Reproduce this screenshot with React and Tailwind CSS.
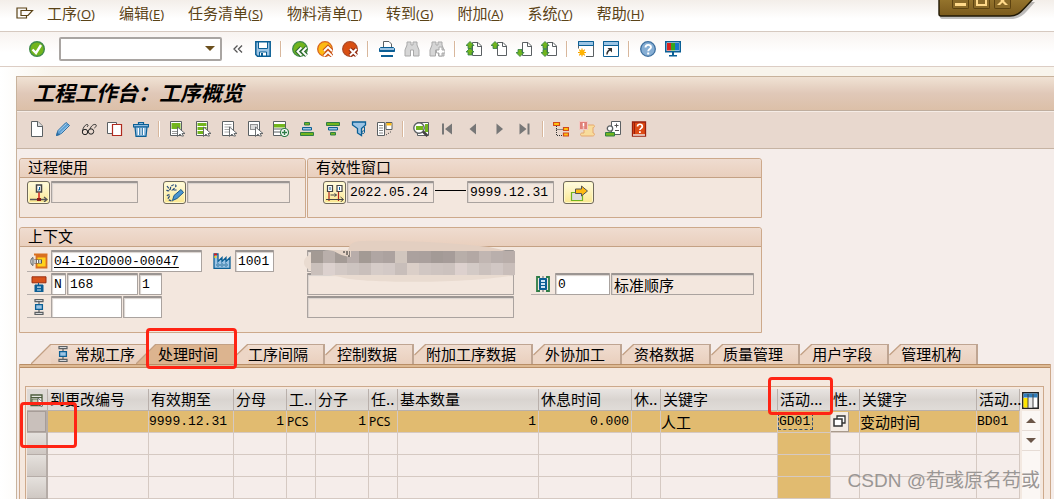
import React from 'react';

const G = '#5b6063';
const BLUE = '#0b5f95';
const SKY = '#9cc4e4';
const GREEN = '#72b51d';
const DKGREEN = '#2f7d46';

function Icon({ w = 16, h = 16, children }) {
  return (
    <svg width={w} height={h} viewBox={`0 0 ${w} ${h}`} fill="none" aria-hidden="true" className="shrink-0">
      {children}
    </svg>
  );
}

const page = <path d="M6.500 1.500H12L15.500 5v9.500H6.500z" fill="#fff" stroke={G} />;
const fold = <path d="M11.500 1.500v4h4" stroke={G} />;
const arrowUp = (x, y) => <path d={`M${x} ${y}l4 4h-2v3h-4v-3h-2z`} fill={GREEN} stroke={DKGREEN} strokeWidth="0.8" />;
const arrowDown = (x, y) => <path d={`M${x} ${y}l4-4h-2v-3h-4v3h-2z`} fill={GREEN} stroke={DKGREEN} strokeWidth="0.8" />;
const cursor = <path d="M8.500 6v9.500l2.500-2.500 1.500 2h2l-1.500-2.500h3z" fill="#fff" stroke={G} strokeWidth="0.9" />;
const binocular = (
  <path d="M2 1h4v3h2V1h4v3l2 5v6H8.500V9h-3v6H0V9l2-5z" transform="translate(1 0)" fill="#d6d6d6" stroke="#a9a9a9" />
);

const icons = {
  ok: (
    <Icon>
      <circle cx="8" cy="8" r="7.300" fill={GREEN} stroke="#3f8a4b" strokeWidth="1.400" />
      <path d="M3.500 8.500l3.500 3.500 5-8" stroke="#fff" strokeWidth="2.400" />
    </Icon>
  ),
  collapse: (
    <Icon w={10} h={8}>
      <path d="M4.500 0.500L1 4l3.500 3.500M9 0.500L5.500 4 9 7.500" stroke="#555" strokeWidth="1.300" />
    </Icon>
  ),
  save: (
    <Icon>
      <path d="M0.800 0.800h14.400v14.400H2.500l-1.700-1.700z" fill={SKY} stroke={BLUE} strokeWidth="1.500" />
      <path d="M3.500 1h9v6.500h-9z" fill="#fff" stroke={BLUE} />
      <path d="M4.500 11h7v4h-7z" fill="#fff" stroke={BLUE} />
      <path d="M6 12h2v3H6z" fill={BLUE} />
    </Icon>
  ),
  back: (
    <Icon>
      <circle cx="8" cy="8" r="7.300" fill={GREEN} stroke="#3f8a4b" strokeWidth="1.300" />
      <path d="M9.500 6.500L5.500 10.500l4 4M14.500 6.500l-4 4 4 4" stroke="#2f6b33" strokeWidth="4" />
      <path d="M9.500 6.500L5.500 10.500l4 4M14.500 6.500l-4 4 4 4" stroke="#fff" strokeWidth="1.800" />
    </Icon>
  ),
  exit: (
    <Icon>
      <circle cx="8" cy="8" r="7.300" fill="#fdb913" stroke="#d9661f" strokeWidth="1.300" />
      <path d="M7 10l4-4 4 4M7 15l4-4 4 4" stroke="#c95318" strokeWidth="4" />
      <path d="M7 10l4-4 4 4M7 15l4-4 4 4" stroke="#fff" strokeWidth="1.800" />
    </Icon>
  ),
  cancel: (
    <Icon>
      <circle cx="8" cy="8" r="7.300" fill="#d94f12" stroke="#ad4a26" strokeWidth="1.300" />
      <path d="M8 8l6.500 6.500M14.500 8L8 14.500" stroke="#8f2a10" strokeWidth="4.200" />
      <path d="M8 8l6.500 6.500M14.500 8L8 14.500" stroke="#fff" strokeWidth="2" />
    </Icon>
  ),
  print: (
    <Icon>
      <path d="M4.500 6V0.500H10L12.500 3v3" fill="#fff" stroke={G} />
      <path d="M1.500 6.500h13l1 1v3h-15v-3z" fill={SKY} stroke={BLUE} />
      <path d="M0.500 9h15v1.500h-15z" fill={BLUE} />
      <path d="M2 14h12v2H2z" fill={BLUE} />
    </Icon>
  ),
  find: <Icon>{binocular}</Icon>,
  findNext: (
    <Icon>
      {binocular}
      <path d="M10 6h3v3h3v3h-3v3h-3v-3H7.500V9H10z" fill="#fff" stroke="#aaa" />
    </Icon>
  ),
  first: <Icon>{page}{fold}{arrowUp(4, 0.5)}{arrowUp(4, 7)}</Icon>,
  prev: <Icon>{page}{fold}{arrowUp(4, 0.5)}</Icon>,
  next: <Icon>{page}{fold}{arrowDown(4, 15.5)}</Icon>,
  last: <Icon>{page}{fold}{arrowUp(4, 0.5)}{arrowDown(4, 15.5)}</Icon>,
  session: (
    <Icon>
      <path d="M0.500 0.500h15v15h-15z" fill="#fff" stroke={G} />
      <path d="M0.500 0.500h15v4h-15z" fill={SKY} stroke={BLUE} />
      <path d="M0 7.500h8v8.500H0z" fill="#fff" />
      <path d="M4 7.500v8M0 11.500h8M1.200 8.700l5.600 5.600M6.800 8.700l-5.600 5.600" stroke="#f5a000" strokeWidth="1.200" />
      <circle cx="4" cy="11.500" r="2.500" fill="#ffb400" />
    </Icon>
  ),
  shortcut: (
    <Icon>
      <path d="M0.500 0.500h15v15h-15z" fill="#fff" stroke={BLUE} />
      <path d="M0.500 0.500h15v4h-15z" fill={SKY} stroke={BLUE} />
      <path d="M4 13.500c0-3 1-4 3.500-5" stroke="#333" strokeWidth="1.500" />
      <path d="M4.500 7H9v4.500z" fill="#333" />
    </Icon>
  ),
  help: (
    <Icon>
      <circle cx="8" cy="8" r="7.300" fill="#86aed4" stroke="#3d6f9f" strokeWidth="1.300" />
      <path d="M5.500 6.500C5.500 3 11 3 11 6.200 11 8 8.200 8 8.200 10.300" stroke="#fff" strokeWidth="1.900" />
      <path d="M7.200 11.500h2v2h-2z" fill="#fff" />
    </Icon>
  ),
  monitor: (
    <Icon>
      <path d="M0.800 0.800h14.400v9.900H0.800z" fill="#fff" stroke={BLUE} strokeWidth="1.600" />
      <path d="M2 2h4v7.500H2z" fill="#d8201c" />
      <path d="M6 2h4v7.500H6z" fill="#36a51c" />
      <path d="M10 2h4v7.500h-4z" fill="#1677c8" />
      <path d="M7 11h2v3H7zM4 14h8v1.500H4z" fill={BLUE} />
    </Icon>
  ),
  create: (
    <Icon>
      <path d="M2.500 0.500H9L13.500 5v10.500h-11z" fill="#fff" stroke={G} />
      <path d="M8.500 0.500v5h5" fill="#ddd" stroke={G} />
    </Icon>
  ),
  edit: (
    <Icon>
      <path d="M1.500 14.500l1.500-5L11 1.500l3.500 3L6.500 12.500z" fill="#5ea0d4" stroke="#2c6ea3" />
      <path d="M3.500 10L11.500 2.500M5.500 12L13.500 4.500" stroke="#b9dcf4" strokeWidth="0.800" />
      <path d="M1 15l1-4 3 3z" fill="#2c6ea3" />
    </Icon>
  ),
  glasses: (
    <Icon>
      <circle cx="4" cy="11" r="2.700" stroke="#222" />
      <circle cx="10" cy="10.500" r="2.700" stroke="#222" />
      <path d="M1.500 10C2 6 5 3 6.500 3.500S6 6 6 6M6.700 10.500h.8M9 8c1-3 3.500-5 5.500-4.500S14 7 13.500 7" stroke="#222" strokeWidth="0.900" />
    </Icon>
  ),
  copy: (
    <Icon>
      <path d="M0.500 1.500h9v11h-9z" fill="#fff" stroke={G} />
      <path d="M5.500 3.500h9v11h-9z" fill="#fff" stroke="#b02a1e" strokeWidth="1.200" />
    </Icon>
  ),
  trash: (
    <Icon>
      <path d="M5.500 3V1.500h5V3M0.500 6V3.500h15V6z" fill="#8fbce0" stroke={BLUE} strokeWidth="1.200" />
      <path d="M2 6h12l-1 9.300H3z" fill="#8fbce0" stroke={BLUE} strokeWidth="1.200" />
      <path d="M5.500 7v7M8 7v7M10.500 7v7" stroke="#fff" strokeWidth="1.200" />
      <path d="M6.800 7v7M9.300 7v7" stroke={BLUE} strokeWidth="0.800" />
    </Icon>
  ),
  pickOne: (
    <Icon>
      <path d="M1.500 0.500h11v14h-11z" fill="#fff" stroke={G} />
      <path d="M2.500 2h9v6h-9z" fill={GREEN} />
      <path d="M3 10.500h5M3 12.500h5" stroke="#999" />
      {cursor}
    </Icon>
  ),
  pickAll: (
    <Icon>
      <path d="M1.500 0.500h11v14h-11z" fill="#fff" stroke={G} />
      <path d="M2.500 2h9v3h-9zM2.500 6h9v3h-9zM2.500 10h6v3h-6z" fill={GREEN} />
      {cursor}
    </Icon>
  ),
  pickNone: (
    <Icon>
      <path d="M1.500 0.500h11v14h-11z" fill="#fff" stroke={G} />
      <path d="M3.500 3.500h7M3.500 6h7M3.500 8.500h5M3.500 11h5" stroke="#aaa" />
      {cursor}
    </Icon>
  ),
  pickBlock: (
    <Icon>
      <path d="M1.500 0.500h11v14h-11z" fill="#fff" stroke={G} />
      <path d="M3.500 3.500h7v5h-7z" fill="#ddd" stroke="#333" strokeDasharray="1 1" />
      {cursor}
    </Icon>
  ),
  insert: (
    <Icon>
      <path d="M0.500 0.500h12v14h-12z" fill="#fff" stroke={G} />
      <path d="M1 3h11v3.500H1z" fill={GREEN} />
      <path d="M1 8h11M1 11h8" stroke={G} />
      <circle cx="11.500" cy="11.500" r="4" fill="#fff" stroke={DKGREEN} strokeWidth="1.200" />
      <path d="M11.500 9v5M9 11.500h5" stroke={DKGREEN} strokeWidth="1.400" />
    </Icon>
  ),
  asc: (
    <Icon>
      <path d="M5.500 1.500h5v2.500h-5zM1.500 11.500h13v3h-13z" fill={GREEN} stroke={DKGREEN} />
      <path d="M3.500 6.500h9v2.500h-9z" fill={SKY} stroke={BLUE} />
    </Icon>
  ),
  desc: (
    <Icon>
      <path d="M1.500 1.500h13v3h-13zM5.500 11.500h5v2.500h-5z" fill={GREEN} stroke={DKGREEN} />
      <path d="M3.500 6.500h9v2.500h-9z" fill={SKY} stroke={BLUE} />
    </Icon>
  ),
  filter: (
    <Icon>
      <path d="M1.500 1h13v3l-4 3.500v7L6.500 12V7.500l-5-3.500z" fill={SKY} stroke={BLUE} strokeWidth="1.300" />
      <path d="M13.500 6v5.500c-1 2-3 1-2.500-.5s2-1.500 2.500-.5" stroke={BLUE} />
    </Icon>
  ),
  layout: (
    <Icon>
      <path d="M0.500 1.500h7v13h-7z" fill="#fff" stroke={G} />
      <path d="M2 4.500h4M2 7h4M2 9.500h4M2 12h4" stroke="#888" />
      <path d="M9 1.500h6v7H9z" fill="#fff" stroke={G} />
      <path d="M9.500 2h5v2.500h-5z" fill="#fdb913" />
      <path d="M9 14l6-4" stroke="#333" strokeDasharray="1 1.500" />
    </Icon>
  ),
  search: (
    <Icon>
      <path d="M4.500 1.500h11v13h-11z" fill="#fff" stroke={G} />
      <path d="M12 3h3v8h-3z" fill={GREEN} />
      <circle cx="6" cy="7" r="5.200" fill="#fff" stroke={G} strokeWidth="1.400" />
      <path d="M3 5h7v4H3z" fill={GREEN} />
      <path d="M10 10.500l4.500 4.500" stroke="#444" strokeWidth="2.600" />
    </Icon>
  ),
  toFirst: <Icon><path d="M3 2.500h2v11H3zM13 2.500v11L6 8z" fill="#777" /></Icon>,
  toPrev: <Icon><path d="M11 2.500v11L4.500 8z" fill="#777" /></Icon>,
  toNext: <Icon><path d="M5.500 2.500v11L12 8z" fill="#777" /></Icon>,
  toLast: <Icon><path d="M2.500 2.500v11L9.500 8zM10.500 2.500h2v11h-2z" fill="#777" /></Icon>,
  tree: (
    <Icon>
      <path d="M3.500 5v9.500h7M3.500 8.500h7" stroke="#333" strokeDasharray="1 1" />
      <path d="M0.500 1.500h6v3h-6zM10.500 6.500h5v3h-5zM10.500 12h5v3h-5z" fill="#ffc20e" stroke="#d2491a" strokeWidth="1.200" />
    </Icon>
  ),
  alertLog: (
    <Icon>
      <path d="M5 4h9c2 0 2 2.500 0 2.500V12c2 0 2 3-.5 3H3c-2 0-2-3 0-3h2z" fill="#f8dc9c" stroke="#e6a76c" />
      <path d="M0.500 0.500h8v8h-8z" fill="#e08078" stroke="#f3c9c4" />
      <path d="M4.500 2v3.500M4.500 6.500v1" stroke="#fff" strokeWidth="1.500" />
    </Icon>
  ),
  assign: (
    <Icon>
      <path d="M6.500 0.500h9v13h-9z" fill="#fff" stroke={G} />
      <path d="M11.500 2.500v4M9.500 4.500h4M10 9.500h4" stroke="#555" />
      <circle cx="5" cy="7.500" r="2.700" fill="#fff" stroke={G} strokeWidth="1.300" />
      <path d="M0.500 11.500h9v3.500h-9z" fill={GREEN} stroke={DKGREEN} />
    </Icon>
  ),
  manual: (
    <Icon>
      <path d="M1.500 1h13v14h-13z" fill="#dd4a14" stroke="#99200e" strokeWidth="1.300" />
      <path d="M3.500 1v12" stroke="#99200e" />
      <path d="M2 14h12" stroke="#eee" strokeWidth="1.400" />
      <path d="M6.500 5.500c0-3 4.800-3 4.800 0 0 2-2.400 1.800-2.400 3.600" stroke="#fff" strokeWidth="1.700" />
      <path d="M8 10.200h1.800V12H8z" fill="#fff" />
    </Icon>
  ),
  process: (
    <Icon w={18} h={18}>
      <path d="M6.500 1h5v7h-5z" fill="#fff" stroke="#444" strokeWidth="1.500" />
      <path d="M9.500 3v3h-1.500" stroke={BLUE} />
      <path d="M9 8.500v6" stroke="#d8201c" strokeWidth="1.500" />
      <path d="M0 15.500h17M14 13l3 2.500-3 2.500" stroke="#555" strokeWidth="1.300" />
      <path d="M7 14h4v3H7z" fill="#8a1d17" />
    </Icon>
  ),
  sketch: (
    <Icon w={18} h={18}>
      <path d="M1 2l3 4M0.500 6c2 2 4 0 4-2s3-4 5-3-2 4-3 5h5M1 12c1-2 4-1 2 1s0 4 4 4" stroke="#24497c" strokeWidth="1.200" strokeDasharray="3 1" />
      <path d="M6.500 16.500l1.500-5 7-6 2.500 3-6.500 6z" fill="#4b95cf" stroke="#1e5b88" />
    </Icon>
  ),
  range: (
    <Icon w={18} h={18}>
      <path d="M1.500 1.500h5v6h-5zM11 1.500h5v6h-5z" fill="#fff" stroke="#444" strokeWidth="1.200" />
      <path d="M4 3v3M13.500 3v3" stroke={BLUE} />
      <path d="M3 8v9M12.500 8v9" stroke="#b2251c" strokeWidth="1.200" />
      <path d="M4.500 11h6M8.500 9.500l2 1.500-2 1.500M0 15.500h17M14.500 13l3 2.500-3 2.500" stroke="#444" />
    </Icon>
  ),
  goto: (
    <Icon w={18}>
      <path d="M1.500 7.500h11v8h-11z" fill="#ddd" stroke={GREEN} strokeWidth="1.200" />
      <path d="M5.500 8.500V4h6V1l6 5-6 5V8.500z" fill="#fdb913" stroke="#555" />
    </Icon>
  ),
  material: (
    <Icon w={18}>
      <path d="M4 1.500h13.500M6.500 3.500h10v11h-10z" fill="#ffd21c" stroke="#d9701f" strokeWidth="1.800" />
      <path d="M3 4.500c-3 1-3 7 0 8z" fill="#ddd" stroke={G} />
      <path d="M4 8.500h8" stroke="#555" strokeWidth="4" />
      <path d="M5 7v3M7.500 7v3M10 7v3" stroke="#fff" strokeWidth="1.300" />
    </Icon>
  ),
  factory: (
    <Icon w={18}>
      <path d="M1 1v14.500h16V4.500l-4 4v-4l-4 4v-4l-4 4V1z" fill={SKY} stroke={BLUE} strokeWidth="1.300" />
      <path d="M1 0.500h3v2H1z" fill="#d8201c" />
      <path d="M1.500 3h2v2h-2z" fill="#ffd21c" />
      <path d="M4 11h2v2H4zM8 11h2v2H8zM12 11h2v2h-2z" fill="#fff" stroke={BLUE} strokeWidth="0.800" />
    </Icon>
  ),
  network: (
    <Icon>
      <path d="M1 0.800h14v6H1z" fill="#d9531b" stroke="#9b2f12" />
      <path d="M7.500 7v2M4 9h8v7H4z" fill={BLUE} stroke={BLUE} />
      <path d="M6 10.500h4v1.200H6zM6 13.500h4v1H6z" fill="#cfe4f4" />
    </Icon>
  ),
  operation: (
    <Icon>
      <path d="M4 0.700h8v2H4zM4 13.300h8v2H4z" fill="#fff" stroke={G} strokeWidth="1.200" />
      <path d="M8 3v10" stroke={G} strokeWidth="1.200" />
      <path d="M4.600 5.600h6.800v4.800H4.600z" fill={SKY} stroke={BLUE} strokeWidth="1.300" />
    </Icon>
  ),
  sequence: (
    <Icon>
      <path d="M5 1H2v14h3M11 1h3v14h-3" stroke={DKGREEN} strokeWidth="1.800" />
      <path d="M4.500 2.500h7v11h-7z" fill={BLUE} stroke={BLUE} />
      <path d="M6 4h4v2H6zM6 7h4v2H6zM6 10h4v2H6z" fill="#cfe4f4" />
      <path d="M8 0v2M8 14v2" stroke={G} />
    </Icon>
  ),
  selectAll: (
    <Icon w={14} h={14}>
      <path d="M1 2h11v10.500H1z" fill="#fff" stroke="#4a5a3a" strokeWidth="1.300" />
      <path d="M1 4.500h11" stroke="#4a5a3a" strokeWidth="1.300" />
      <path d="M2 6h6v4H2z" fill="#c5cdb8" stroke="#4a5a3a" strokeWidth="0.800" />
      <path d="M8 5v8l2-2 1 2.500 1.500-.5-1-2.500H14z" fill="#fff" stroke={G} strokeWidth="0.800" />
    </Icon>
  ),
  columns: (
    <Icon w={17} h={17}>
      <path d="M0.800 0.800h15.400v15.400H0.800z" fill="#fff" stroke="#222" strokeWidth="1.500" />
      <path d="M1.500 1.500h14v4h-14z" fill="#2f7dbb" />
      <path d="M1.500 6h4.500v9.500H1.500z" fill="#ffe600" />
      <path d="M6 6h5v9.500H6z" fill="#e8e8e8" />
      <path d="M6 2v14M11 2v14" stroke="#444" />
    </Icon>
  ),
  matchcode: (
    <Icon w={13} h={12}>
      <path d="M4 1h8v7H4z" fill="#fff" stroke="#333" strokeWidth="1.300" />
      <path d="M1 4h8v7H1z" fill="#fff" stroke="#333" strokeWidth="1.500" />
    </Icon>
  ),
};

const menus = [
  ['工序', 'O'], ['编辑', 'E'], ['任务清单', 'S'], ['物料清单', 'T'],
  ['转到', 'G'], ['附加', 'A'], ['系统', 'Y'], ['帮助', 'H'],
];

const systemTools = [
  ['collapse', '收起'], ['save', '保存'], null,
  ['back', '返回'], ['exit', '退出'], ['cancel', '取消'], null,
  ['print', '打印'], ['find', '查找'], ['findNext', '继续查找'], null,
  ['first', '首页'], ['prev', '上一页'], ['next', '下一页'], ['last', '末页'], null,
  ['session', '新建会话'], ['shortcut', '创建快捷方式'], null,
  ['help', '帮助'], ['monitor', '定制布局'],
];

const appTools = [
  ['create', '新建'], ['edit', '更改'], ['glasses', '显示'], ['copy', '复制'], ['trash', '删除'], null,
  ['pickOne', '选择'], ['pickAll', '全选'], ['pickNone', '取消选择'], ['pickBlock', '选择块'], ['insert', '插入行'],
  ['asc', '升序'], ['desc', '降序'], ['filter', '过滤'], ['layout', '格式'], null,
  ['search', '搜索'], ['toFirst', '第一个'], ['toPrev', '前一个'], ['toNext', '后一个'], ['toLast', '最后一个'], null,
  ['tree', '层次'], ['alertLog', '日志'], ['assign', '分配'], ['manual', '手册'],
];

function ToolItems({ items, cell, sep }) {
  return items.map((item, i) =>
    item ? (
      <button key={item[0]} type="button" aria-label={item[1]} className={`flex h-6 shrink-0 items-center justify-center ${cell}`}>
        {icons[item[0]]}
      </button>
    ) : (
      <span key={i} className={`flex shrink-0 justify-center ${sep}`}>
        <span className="h-4 w-0.5 border-r border-white bg-[#d8b79c]" />
      </span>
    )
  );
}

const mono = "font-['Liberation_Mono','Noto_Sans_CJK_SC',monospace] text-[13px]";

function Field({ label, width, value = '', off, className = '' }) {
  return (
    <input
      aria-label={label}
      defaultValue={value}
      readOnly={off}
      className={`h-[22px] shrink-0 rounded-[1px] border border-t-2 border-[#aaa39f] border-t-[#9b9592] px-0.5 text-black shadow-[inset_1px_1px_1px_#d9d2ce] outline-none ${
        off ? 'bg-[#f3e7de]' : 'bg-white'
      } ${width} ${className || mono}`}
    />
  );
}

function YellowButton({ label, icon, width = 'w-[23px]' }) {
  return (
    <button
      type="button"
      aria-label={label}
      className={`flex h-[23px] shrink-0 items-center justify-center rounded-[3px] border border-[#6f695c] bg-linear-to-b from-[#fffbe0] to-[#fbe78e] shadow-[inset_0_0_0_1px_#fff8c8] ${width}`}
    >
      {icons[icon]}
    </button>
  );
}

function Tag({ icon }) {
  return <span className="flex h-[22px] w-6 shrink-0 items-center justify-center border-b border-[#b5aeaa]">{icons[icon]}</span>;
}

function Group({ title, className, children }) {
  return (
    <section className={`rounded-t-[3px] border border-[#cda98b] bg-[#f3e7de] ${className}`}>
      <h2 className="h-[19px] rounded-t-[3px] border-b border-[#c4a184] bg-linear-to-b from-[#efdcd0] to-[#e9cfbd] px-2 text-[15px] leading-4">
        {title}
      </h2>
      {children}
    </section>
  );
}

function Marker({ className }) {
  return <span aria-hidden="true" className={`pointer-events-none absolute z-10 rounded-[4px] border-3 border-[#ff2414] ${className}`} />;
}

const mosaic = [
  '#a39a94', '#b9afab', '#a49b96', '#b8adaa', '#a39a94', '#b0a6a3', '#aca29f', '#d1c6be', '#aba19e',
  '#aaa09d', '#a39a96', '#a69c99', '#b8aea9', '#b3a8a4', '#c1b6b2', '#b9afac', '#b8ada9',
  '#cac0bb', '#dcd1ce', '#d3c9c5', '#cdc4c0', '#c9bfbb', '#d6ccc8', '#d3c9c6', '#c8beba', '#dbcfc8',
  '#d1c7c3', '#cec4c0', '#ccc2be', '#ddd1ce', '#d3cac6', '#cbc1bd', '#d1c7c4', '#c9beba',
];

function Redaction() {
  return (
    <svg width="214" height="44" viewBox="0 0 214 44" aria-hidden="true" className="absolute -top-[11px] -left-[3px]">
      <path d="M44 14c0-10 6-12 16-12 40-1 90 2 125 6 10 2 20 4 25 8z" fill="#e3cfc1" />
      <path d="M0 22c2-9 20-12 44-10h166v24c-40 8-140 9-170 3C20 34-2 34 0 22z" fill="#e9dbd0" />
      {mosaic.map((fill, i) => (
        <rect key={i} x={7 + (i % 17) * 12} y={i < 17 ? 12 : 24} width="12" height="12" fill={fill} />
      ))}
      <path d="M24 11c8 0 10 6 23 7V11z" fill="#e6d5c8" />
      <path d="M39 13h7M42 15h4M44 17h2" stroke="#222" strokeDasharray="2 1" />
    </svg>
  );
}

const tabs = ['工序间隔', '控制数据', '附加工序数据', '外协加工', '资格数据', '质量管理', '用户字段', '管理机构'];

function Tab({ label, variant, icon, marker }) {
  const wide = variant !== 'plain';
  const active = variant === 'active';
  const fill = active ? '#dcb48f' : '#edd6c6';
  return (
    <button
      type="button"
      role="tab"
      aria-selected={active}
      className={`relative flex h-5 shrink-0 items-stretch text-[15px] leading-[18px] ${active ? '-ml-[11px]' : ''}`}
    >
      <svg width={wide ? 20 : 12} height="20" viewBox={wide ? '0 0 20 20' : '0 0 12 20'} aria-hidden="true" className="shrink-0">
        <path d={wide ? 'M0 20L20 0V20z' : 'M0 20V11L12 0V20z'} fill={fill} />
        <path d={wide ? 'M0 20L19.500 0.500H20' : 'M0.500 11L11.500 0.500H12'} fill="none" stroke="#c2a084" strokeWidth="1.300" />
      </svg>
      <span
        className={`flex items-start border-t border-r ${
          active
            ? 'border-[#c2a084] bg-[#dcb48f] pr-[17px] pl-0.5'
            : wide
              ? 'gap-1 border-[#c2a084] bg-linear-to-b from-[#f0ddd0] to-[#e9cfbd] pr-[11px] pl-1'
              : 'border-r-2 border-[#bfa592] bg-linear-to-b from-[#f0ddd0] to-[#e9cfbd] pr-[15px]'
        }`}
      >
        {icon && <span className="pt-px">{icon}</span>}
        {label}
      </span>
      {marker && <Marker className="-top-4 left-[10px] h-[41px] w-[91px]" />}
    </button>
  );
}

const columns = [
  ['到更改编号', 'w-[101px]'], ['有效期至', 'w-[85px]'], ['分母', 'w-[53px]'], ['工..', 'w-[29px]'],
  ['分子', 'w-[53px]'], ['任..', 'w-[29px]'], ['基本数量', 'w-[141px]'], ['休息时间', 'w-[93px]'],
  ['休..', 'w-[29px]'], ['关键字', 'w-[117px]'], ['活动...', 'w-[53px]'], ['性..', 'w-[29px]'],
  ['关键字', 'w-[117px]'], ['活动...', ''],
];

const right = 'text-right pr-0.5 ' + mono;
const unit = "text-[12px] font-['Noto_Sans',sans-serif]";
const firstRow = [
  ['', ''], ['9999.12.31', mono], ['1', right], ['PCS', unit], ['1', right], ['PCS', unit], ['1', right],
  ['0.000', right], ['', ''], ['人工', ''], ['GD01', mono], ['', ''], ['变动时间', ''], ['BD01', mono],
];

function OperationTable() {
  return (
    <table className="w-full table-fixed border-separate border-spacing-0 text-[15px]">
      <thead>
        <tr className="h-[22px]">
          <th className="w-[21px] border-r border-b border-[#b9b0ab] bg-[#dedad6] p-0">
            <button type="button" aria-label="选择全部" className="flex h-5 w-5 items-center justify-center">{icons.selectAll}</button>
          </th>
          {columns.map(([name, width], i) => (
            <th
              key={i}
              scope="col"
              className={`relative border-r border-b border-[#b9b0ab] bg-linear-to-b from-[#e8e4e1] via-[#d9d4d0] to-[#e0dcd8] p-0 pb-0.5 pl-0.5 text-left leading-[19px] font-normal whitespace-nowrap ${width}`}
            >
              {name}
              {i === 10 && <Marker className="-top-3 -left-[10px] h-[38px] w-[65px]" />}
            </th>
          ))}
        </tr>
      </thead>
      <tbody>
        {[0, 1, 2, 3].map((row) => (
          <tr key={row} className="h-[22px]">
            <td className="relative border-r-2 border-b border-[#b5aca7] bg-linear-to-b from-[#e5e1dd] to-[#cfc8c3] p-0">
              <button
                type="button"
                aria-label={`选择第 ${row + 1} 行`}
                className={`block h-[21px] w-[19px] ${row === 0 ? 'border border-[#a79d98] bg-[#c9c0bb]' : ''}`}
              />
              {row === 0 && <Marker className="-top-[9px] -left-[7px] h-[46px] w-[57px]" />}
            </td>
            {firstRow.map(([text, style], i) => (
              <td
                key={i}
                className={`border-r border-b border-[#d5c9c2] p-0 leading-[21px] whitespace-nowrap ${
                  row === 0 || i === 10 ? 'bg-[#e1bb70]' : 'bg-[#f5edea]'
                } ${style}`}
              >
                {row === 0 && i === 10 && (
                  <span className="flex h-[17px] w-[35px] items-center border border-dashed border-[#35506e]">{text}</span>
                )}
                {row === 0 && i === 11 && (
                  <button type="button" aria-label="可能的条目" className="flex h-5 w-[18px] items-center justify-center border-r border-b border-[#a89a8c] bg-[#f3ebe4]">
                    {icons.matchcode}
                  </button>
                )}
                {row === 0 && i !== 10 && i !== 11 && text}
              </td>
            ))}
          </tr>
        ))}
      </tbody>
    </table>
  );
}

function FloatingControls() {
  return (
    <div className="absolute top-0 right-[18px] h-5 w-[98px]">
      <svg width="98" height="20" viewBox="0 0 98 20" aria-hidden="true" className="absolute inset-0">
        <defs>
          <linearGradient id="gold" x1="0" y1="0" x2="0" y2="1">
            <stop offset="0" stopColor="#97762e" />
            <stop offset="1" stopColor="#7a5a1c" />
          </linearGradient>
        </defs>
        <path d="M2 2v15q0 2 3 2h70q8-1 14-8l8-9z" fill="#000" opacity="0.250" />
        <path d="M1 -2V14q0 2 2 2h69c10 0 14-8 24-18z" fill="url(#gold)" stroke="#201804" strokeWidth="1.400" />
      </svg>
      <div className="relative flex gap-1 pl-3.5">
        {[
          ['最小化', 'M4 3h11v3H4z'],
          ['最大化', 'M4 -4h11V6H4zM6 -4v8h7v-8z'],
          ['关闭', 'M5 -4h2l2.500 3L12-4h2l-3 5 4 4h-3L9.500 2.500 7 5H4l4-4z'],
        ].map(([label, d]) => (
          <button key={label} type="button" aria-label={label} className="h-[9px] w-[17px] rounded-b-[2px] border border-t-0 border-[#5c4210] bg-[#8a6a28]">
            <svg width="15" height="8" viewBox="2 0 15 8" aria-hidden="true">
              <path d={d} fill="#ffd98a" fillRule="evenodd" />
            </svg>
          </button>
        ))}
      </div>
    </div>
  );
}

export default function App() {
  return (
    <div className="relative flex min-h-screen flex-col overflow-hidden bg-white font-['Noto_Sans_CJK_SC',sans-serif] text-black">
      <nav className="flex h-8 items-start gap-6 border-b border-[#d6c9c0] bg-linear-to-b from-[#f3eee9] to-white to-60% pt-[3px] pl-4 text-[15px] leading-5 text-[#5b4317]">
        <button type="button" aria-label="系统菜单" className="-mr-[11px] pt-1">
          <Icon w={18} h={12}>
            <path d="M10.500 3V1H1v10h9.500V9" stroke="#5b4317" strokeWidth="1.200" />
            <path d="M5 3.500h11.500L12 8.500H5z" stroke="#5b4317" strokeWidth="1.200" />
          </Icon>
        </button>
        {menus.map(([name, key]) => (
          <button key={name} type="button" className="shrink-0">
            {name}
            <span className="font-['Noto_Sans',sans-serif] text-[13px]">(<u>{key}</u>)</span>
          </button>
        ))}
      </nav>

      <div className="flex h-[35px] items-center border-b border-[#dccdc4] bg-linear-to-b from-[#f8f3f0] to-white to-60% pl-6">
        <button type="button" aria-label="确认" className="mr-2.5 flex w-[25px] justify-center">{icons.ok}</button>
        <span className="relative mr-[3px] flex">
          <input aria-label="命令" className="h-6 w-[163px] rounded-[2px] border-2 border-[#a9a5a2] bg-white px-1 text-[13px] outline-none" />
          <svg width="10" height="5" viewBox="0 0 10 5" aria-hidden="true" className="absolute top-[9px] right-[7px]">
            <path d="M0 0h10L5 5z" fill="#6b4f1c" />
          </svg>
        </span>
        <ToolItems items={systemTools} cell="w-[25px]" sep="w-3" />
      </div>

      <div className="flex flex-1 flex-col bg-linear-to-r from-white to-[#f8f4ec] to-5% pt-[9px] pl-4">
        <main className="flex flex-1 flex-col border-t border-l border-[#c8b29c] bg-[#f5edea]">
          <h1 className="h-[34px] border-b border-[#bfae9f] bg-linear-to-b from-[#f0e2d4] via-[#e0c8b8] to-[#dcc0a8] pl-4 text-[21px] leading-[30px] font-bold italic">
            工程工作台：工序概览
          </h1>
          <div className="flex h-[38px] items-center border-t border-b border-t-[#f5ece6] border-b-[#c6b3a3] bg-[#e8d8ce] pb-[3px] pl-[7px]">
            <ToolItems items={appTools} cell="w-[26px]" sep="w-2.5" />
          </div>

          <div className="flex gap-px pt-[9px] pl-0.5">
            <Group title="过程使用" className="h-[60px] w-[287px]">
              <div className="flex gap-px pt-[3px] pl-[7px]">
                <YellowButton label="过程" icon="process" />
                <Field label="过程使用" width="mr-6 w-[87px]" off />
                <YellowButton label="草图" icon="sketch" />
                <Field label="过程说明" width="w-[103px]" off />
              </div>
            </Group>
            <Group title="有效性窗口" className="h-[60px] w-[455px]">
              <div className="flex items-start gap-px pt-[3px] pl-[15px]">
                <YellowButton label="日期范围" icon="range" />
                <Field label="有效期自" width="w-[87px]" value="2022.05.24" off />
                <span className="mt-[9px] h-px w-[31px] bg-black" />
                <Field label="有效期至" width="mr-2 w-[87px]" value="9999.12.31" off />
                <YellowButton label="转到" icon="goto" width="w-[31px]" />
              </div>
            </Group>
          </div>

          <div className="pt-[9px] pl-0.5">
            <Group title="上下文" className="h-[106px] w-[743px]">
              <div className="flex flex-col gap-px pt-[3px] pl-[7px]">
                <div className="flex">
                  <div className="flex w-[280px]">
                    <Tag icon="material" />
                    <Field label="物料" width="w-[151px]" value="04-I02D000-00047" className={`underline underline-offset-2 ${mono}`} />
                    <span className="ml-[11px] flex w-[22px] items-center">{icons.factory}</span>
                    <Field label="工厂" width="w-[39px]" value="1001" />
                  </div>
                  <div className="relative flex">
                    <Field label="物料描述" width="w-[207px]" off />
                    <Redaction />
                  </div>
                </div>
                <div className="flex">
                  <div className="flex w-[280px] gap-px">
                    <span className="-mr-px flex"><Tag icon="network" /></span>
                    <Field label="类型" width="w-[15px]" value="N" className={`-mr-px ${mono}`} />
                    <Field label="组" width="ml-px w-[71px]" value="168" />
                    <Field label="组计数器" width="w-[23px]" value="1" />
                  </div>
                  <Field label="组描述" width="w-[207px]" off />
                  <span className="ml-[17px] flex"><Tag icon="sequence" /></span>
                  <Field label="顺序" width="w-[55px]" value="0" />
                  <Field label="顺序描述" width="ml-px w-[143px]" value="标准顺序" off className="text-[15px] leading-[18px]" />
                </div>
                <div className="flex">
                  <div className="flex w-[280px]">
                    <Tag icon="operation" />
                    <Field label="工序号" width="mr-px w-[71px]" />
                    <Field label="子工序" width="w-[39px]" />
                  </div>
                  <Field label="工序描述" width="w-[207px]" off />
                </div>
              </div>
            </Group>
          </div>

          <div role="tablist" className="flex pt-[11px] pl-[14px]">
            <Tab label="常规工序" variant="first" icon={icons.operation} />
            <Tab label="处理时间" variant="active" marker />
            {tabs.map((t) => <Tab key={t} label={t} variant="plain" />)}
          </div>

          <div className="mr-[3px] ml-0.5 flex flex-1 flex-col border-r border-l border-[#cda98b] bg-[#f5e8de]">
            <div className="h-1 border-y border-[#b98e66] bg-[#deba94]" />
            <div className="mt-[18px] mr-[6px] ml-[5px] flex flex-1 border-t border-r border-l border-[#cda98b] pt-0.5 pr-0.5 pl-px">
              <div className="min-w-0 flex-1">
                <OperationTable />
              </div>
              <div className="flex w-[21px] shrink-0 flex-col items-center bg-[#f3e9e1]">
                <button type="button" aria-label="表格设置" className="flex h-[22px] items-center">{icons.columns}</button>
                <div className="flex w-[18px] flex-1 flex-col bg-[#fbf7f4]">
                  {[['向上', 'M5 0l5 5H0z'], ['向下', 'M0 0h10L5 5z']].map(([label, d]) => (
                    <button key={label} type="button" aria-label={label} className="flex h-5 items-center justify-center border-b border-[#e6dcd5]">
                      <svg width="10" height="5" viewBox="0 0 10 5" aria-hidden="true"><path d={d} fill="#6b5648" /></svg>
                    </button>
                  ))}
                </div>
              </div>
            </div>
          </div>
        </main>
      </div>

      <FloatingControls />
      <p className="absolute right-[14px] bottom-1.5 font-['Liberation_Sans','Noto_Sans_CJK_SC',sans-serif] text-[19px] leading-6 text-[#9a9694]">
        CSDN @荀彧原名苟或
      </p>
    </div>
  );
}
